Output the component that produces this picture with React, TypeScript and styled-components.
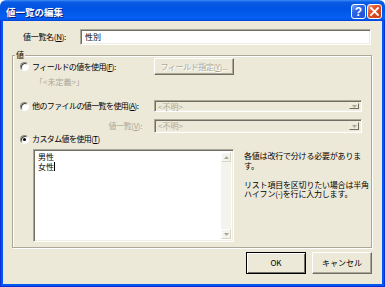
import styled, { createGlobalStyle } from 'styled-components';

const GlobalStyle = createGlobalStyle`
  html, body {
    margin: 0;
    padding: 0;
    background: #ffffff;
  }
  body {
    font-family: "Noto Sans CJK JP", "Noto Sans", sans-serif;
  }
`;

const Window = styled.div`
  width: 385px;
  height: 287px;
  display: flex;
  flex-direction: column;
  overflow: hidden;
  border-radius: 6px 6px 0 0;
`;

const TitleBar = styled.div`
  height: 21px;
  flex: none;
  display: flex;
  align-items: flex-start;
  padding: 4px 3px 0 6px;
  box-sizing: border-box;
  background: linear-gradient(
    to bottom,
    #3d8cf7 0%,
    #0a5be6 10%,
    #0054e3 40%,
    #0660f2 85%,
    #0257ea 94%,
    #003dd7 100%
  );
`;

const Title = styled.div`
  flex: 1;
  margin-top: 1px;
  line-height: 15px;
  font-size: 9.5px;
  font-weight: bold;
  color: #ffffff;
  text-shadow: 1px 1px 0 #0a1883;
`;

const CaptionButtons = styled.div`
  display: flex;
  gap: 1px;
`;

const CaptionButton = styled.div<{ $close?: boolean }>`
  width: 15px;
  height: 15px;
  box-sizing: border-box;
  border: 1px solid #ffffff;
  border-radius: 3px;
  display: flex;
  align-items: center;
  justify-content: center;
  color: #ffffff;
  font-family: "Liberation Sans", Arial, sans-serif;
  font-weight: bold;
  font-size: 12px;
  background: ${(p) =>
    p.$close
      ? 'linear-gradient(135deg, #f0a07a 0%, #e2552b 35%, #cc3b12 100%)'
      : 'linear-gradient(135deg, #7fa8f5 0%, #2d66e8 35%, #1a4ed6 100%)'};
`;

const Frame = styled.div`
  flex: 1;
  display: flex;
  padding: 0 3px 3px 3px;
  background: #0058ee;
  box-shadow: inset 1px 0 #0831d9, inset -1px 0 #0831d9, inset 0 -1px #0831d9;
`;

const Client = styled.div`
  flex: 1;
  display: flex;
  flex-direction: column;
  background: #ece9d8;
  font-size: 8px;
  color: #000000;
`;

const NameRow = styled.div`
  margin-top: 8px;
  height: 16px;
  padding-left: 20px;
  display: flex;
  align-items: center;
`;

const NameLabel = styled.div`
  width: 57px;
  line-height: 10px;
  letter-spacing: -0.3px;
`;

const sunken = `
  box-sizing: border-box;
  border: 1px solid;
  border-color: #aca899 #ffffff #ffffff #aca899;
  box-shadow: inset 1px 1px 0 #716f64, inset -1px -1px 0 #f1efe2;
`;

const TextBox = styled.div`
  ${sunken}
  width: 291px;
  height: 16px;
  background: #ffffff;
  padding-left: 4px;
  line-height: 14px;
`;

const Group = styled.div`
  position: relative;
  margin: 10px 0 0 9px;
  width: 360px;
  box-sizing: border-box;
  border: 1px solid #aca899;
  box-shadow: 1px 1px 0 #ffffff, inset 1px 1px 0 #ffffff;
  padding: 2px 0 5px 7px;
  display: flex;
  flex-direction: column;
`;

const GroupLabel = styled.div`
  position: absolute;
  top: -6px;
  left: 2px;
  padding: 0 1px;
  line-height: 10px;
  background: #ece9d8;
`;

const Row = styled.div<{ $h: number; $top?: number }>`
  display: flex;
  align-items: center;
  height: ${(p) => p.$h}px;
  margin-top: ${(p) => p.$top ?? 0}px;
`;

const Option = styled.label`
  width: 134px;
  display: flex;
  align-items: center;
  gap: 3px;
  line-height: 10px;
  letter-spacing: -0.6px;
  white-space: nowrap;
`;

const Radio = styled.span<{ $checked?: boolean }>`
  position: relative;
  width: 9px;
  height: 9px;
  flex: none;
  box-sizing: border-box;
  border-radius: 50%;
  background: #ffffff;
  border: 1px solid;
  border-color: #8d8b80 #ffffff #ffffff #8d8b80;
  box-shadow: inset 1px 1px 0 #404040;

  &::after {
    content: '';
    display: ${(p) => (p.$checked ? 'block' : 'none')};
    position: absolute;
    left: 2px;
    top: 2px;
    width: 3px;
    height: 3px;
    border-radius: 50%;
    background: #000000;
  }
`;

const SubLabel = styled.div`
  width: 134px;
  box-sizing: border-box;
  padding-right: 12px;
  text-align: right;
  line-height: 10px;
  letter-spacing: -0.4px;
  color: #aca899;
`;

const Note = styled.div`
  padding-left: 15px;
  line-height: 10px;
  color: #aca899;
`;

const PushButton = styled.div<{ $w: number; $h: number; $default?: boolean; $disabled?: boolean }>`
  width: ${(p) => p.$w}px;
  height: ${(p) => p.$h}px;
  box-sizing: border-box;
  display: flex;
  align-items: center;
  justify-content: center;
  white-space: nowrap;
  font-weight: normal;
  background: #ece9d8;
  color: ${(p) => (p.$disabled ? '#aca899' : '#000000')};
  text-shadow: ${(p) => (p.$disabled ? '1px 1px 0 #ffffff' : 'none')};
  letter-spacing: ${(p) => (p.$disabled ? '-0.4px' : '0')};
  border: 1px solid;
  border-color: ${(p) =>
    p.$default ? '#000000' : '#ffffff #716f64 #716f64 #ffffff'};
  box-shadow: ${(p) =>
    p.$default
      ? 'inset 1px 1px 0 #ffffff, inset -1px -1px 0 #716f64'
      : 'inset -1px -1px 0 #aca899'};
  line-height: 10px;
`;

const Combo = styled.div<{ $h: number }>`
  ${sunken}
  width: 208px;
  height: ${(p) => p.$h}px;
  background: #ece9d8;
  display: flex;
  padding: 2px 2px 2px 3px;
`;

const ComboText = styled.div`
  flex: 1;
  line-height: 8px;
  color: #aca899;
`;

const ArrowButton = styled.div`
  width: 10px;
  box-sizing: border-box;
  display: flex;
  align-items: center;
  justify-content: center;
  background: #ece9d8;
  border: 1px solid;
  border-color: #f1efe2 #716f64 #716f64 #f1efe2;
`;

const Arrow = ({ up }: { up?: boolean }) => (
  <svg width="5" height="3" viewBox="0 0 5 3">
    <path d={up ? 'M2.5 0 L5 3 L0 3 Z' : 'M0 0 L5 0 L2.5 3 Z'} fill="#aca899" />
  </svg>
);

const Memo = styled.div`
  ${sunken}
  margin-left: 13px;
  width: 201px;
  height: 93px;
  background: #ffffff;
  display: flex;
  padding: 2px;
`;

const MemoText = styled.div`
  flex: 1;
  padding-left: 2px;
  line-height: 10px;
`;

const Caret = styled.span`
  display: inline-block;
  width: 1px;
  height: 9px;
  background: #000000;
  vertical-align: -1px;
`;

const ScrollBar = styled.div`
  width: 10px;
  display: flex;
  flex-direction: column;
  justify-content: space-between;
  background: #f4f3ee;
`;

const ScrollButton = styled.div`
  height: 10px;
  box-sizing: border-box;
  display: flex;
  align-items: center;
  justify-content: center;
  background: #f4f3ee;
  border: 1px solid;
  border-color: #ffffff #d8d5c7 #d8d5c7 #ffffff;
`;

const Help = styled.div`
  margin-left: 10px;
  align-self: flex-start;
  margin-top: 2px;
  line-height: 9.5px;
  white-space: nowrap;
  letter-spacing: -0.2px;
`;

const Footer = styled.div`
  margin-top: 4px;
  padding-right: 10px;
  display: flex;
  justify-content: flex-end;
  gap: 6px;
`;

export default function App() {
  return (
    <>
      <GlobalStyle />
      <Window>
        <TitleBar>
          <Title>値一覧の編集</Title>
          <CaptionButtons>
            <CaptionButton>?</CaptionButton>
            <CaptionButton $close>
              <svg width="9" height="9" viewBox="0 0 9 9">
                <path d="M1 1 L8 8 M8 1 L1 8" stroke="#ffffff" strokeWidth="1.8" strokeLinecap="square" />
              </svg>
            </CaptionButton>
          </CaptionButtons>
        </TitleBar>
        <Frame>
          <Client>
            <NameRow>
              <NameLabel>値一覧名(<u>N</u>):</NameLabel>
              <TextBox>性別</TextBox>
            </NameRow>

            <Group>
              <GroupLabel>値</GroupLabel>
              <Row $h={17}>
                <Option>
                  <Radio />
                  <span>フィールドの値を使用(<u>F</u>):</span>
                </Option>
                <PushButton $w={80} $h={17} $disabled>
                  フィールド指定(<u>Y</u>)...
                </PushButton>
              </Row>
              <Row $h={12} $top={1}>
                <Note>「&lt;未定義&gt;」</Note>
              </Row>
              <Row $h={12} $top={12}>
                <Option>
                  <Radio />
                  <span>他のファイルの値一覧を使用(<u>A</u>):</span>
                </Option>
                <Combo $h={12}>
                  <ComboText>&lt;不明&gt;</ComboText>
                  <ArrowButton>
                    <Arrow />
                  </ArrowButton>
                </Combo>
              </Row>
              <Row $h={14} $top={7}>
                <SubLabel>値一覧(<u>V</u>):</SubLabel>
                <Combo $h={14}>
                  <ComboText>&lt;不明&gt;</ComboText>
                  <ArrowButton>
                    <Arrow />
                  </ArrowButton>
                </Combo>
              </Row>
              <Row $h={12}>
                <Option>
                  <Radio $checked />
                  <span>カスタム値を使用(<u>T</u>)</span>
                </Option>
              </Row>
              <Row $h={93} $top={4}>
                <Memo>
                  <MemoText>
                    男性
                    <br />
                    女性
                    <Caret />
                  </MemoText>
                  <ScrollBar>
                    <ScrollButton>
                      <Arrow up />
                    </ScrollButton>
                    <ScrollButton>
                      <Arrow />
                    </ScrollButton>
                  </ScrollBar>
                </Memo>
                <Help>
                  各値は改行で分ける必要がありま
                  <br />
                  す。
                  <br />
                  <br />
                  リスト項目を区切りたい場合は半角
                  <br />
                  ハイフン(-)を行に入力します。
                </Help>
              </Row>
            </Group>

            <Footer>
              <PushButton $w={60} $h={22} $default>
                OK
              </PushButton>
              <PushButton $w={60} $h={22}>
                キャンセル
              </PushButton>
            </Footer>
          </Client>
        </Frame>
      </Window>
    </>
  );
}
